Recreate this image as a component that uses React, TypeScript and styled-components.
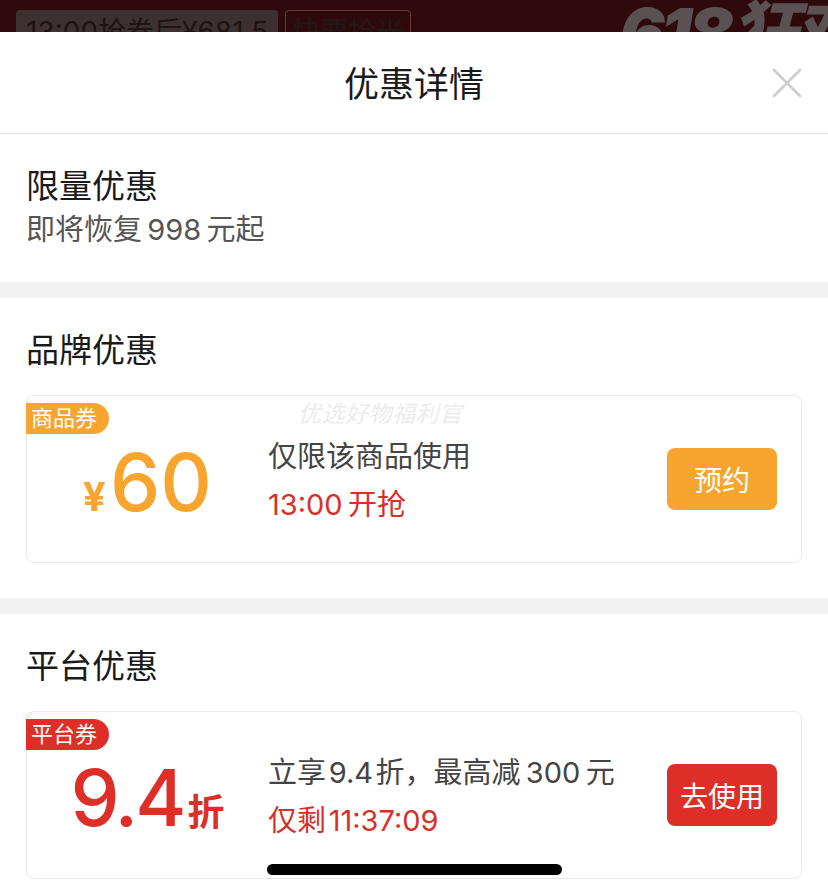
import styled, { createGlobalStyle } from "styled-components";

const GlobalStyle = createGlobalStyle`
  html, body {
    margin: 0;
    padding: 0;
    background: #ffffff;
  }
  body {
    font-family: "Inter", "Noto Sans CJK SC", sans-serif;
    -webkit-font-smoothing: antialiased;
  }
`;

const Page = styled.div`
  width: 828px;
  height: 892px;
  overflow: hidden;
  position: relative;
  background: #ffffff;
`;

const BackStrip = styled.div`
  height: 32px;
  overflow: hidden;
  background: #2f0a0d;
  display: flex;
  align-items: flex-start;
  padding: 10px 0 0 16px;
  box-sizing: border-box;
  gap: 7px;
`;

const BackTag = styled.div`
  background: #3c3130;
  border-radius: 4px;
  padding: 4px 10px;
  font-size: 28px;
  line-height: 36px;
  color: #1e1413;
  white-space: nowrap;
`;

const BackOutline = styled.div`
  border: 1px solid #6a3a3a;
  border-radius: 4px;
  padding: 3px 6px;
  font-size: 28px;
  line-height: 36px;
  color: #241717;
  white-space: nowrap;
`;

const BackBrand = styled.div`
  margin-left: auto;
  margin-top: -18px;
  margin-right: -30px;
  font-size: 68px;
  line-height: 80px;
  font-weight: 900;
  font-style: italic;
  color: #5a5252;
  letter-spacing: -4px;
  white-space: nowrap;
`;

const Sheet = styled.div`
  background: #ffffff;
`;

const Header = styled.div`
  height: 102px;
  display: grid;
  grid-template-columns: 1fr auto 1fr;
  align-items: center;
  border-bottom: 1px solid #e8e8e8;
  box-sizing: border-box;
`;

const HeaderTitle = styled.div`
  grid-column: 2;
  font-size: 35px;
  color: #1a1a1a;
  line-height: 44px;
  padding-top: 2px;
`;

const CloseBtn = styled.div`
  grid-column: 3;
  justify-self: end;
  margin-right: 24px;
  width: 34px;
  height: 34px;
  display: flex;
  align-items: center;
  justify-content: center;
`;

const Section = styled.div<{ $bottom?: number }>`
  padding: 30px 26px ${(p) => p.$bottom ?? 30}px;
`;

const Gap = styled.div`
  height: 16px;
  background: #f2f2f2;
`;

const SectionTitle = styled.div`
  font-size: 33px;
  line-height: 44px;
  color: #1a1a1a;
`;

const SubText = styled.div`
  font-size: 29px;
  line-height: 44px;
  color: #555555;
`;

const Card = styled.div`
  position: relative;
  margin-top: 23px;
  height: 168px;
  border: 1px solid #e9e9e9;
  border-radius: 8px;
  box-sizing: border-box;
  display: flex;
  align-items: center;
  padding-right: 24px;
`;

const Badge = styled.div<{ $color: string }>`
  position: absolute;
  left: -1px;
  top: 7px;
  height: 31px;
  padding: 0 12px 0 5px;
  background: ${(p) => p.$color};
  border-radius: 0 16px 16px 0;
  color: #ffffff;
  font-size: 22px;
  line-height: 31px;
`;

const Watermark = styled.div`
  position: absolute;
  left: 271px;
  top: 2px;
  font-size: 23px;
  line-height: 32px;
  color: #ececec;
  font-style: italic;
  letter-spacing: 0.5px;
`;

const AmountCol = styled.div`
  width: 241px;
  display: flex;
  justify-content: center;
  align-items: baseline;
  gap: 4px;
  padding-top: 6px;
`;

const Amount = styled.span<{ $color: string; $size: number; $track?: number }>`
  color: ${(p) => p.$color};
  font-size: ${(p) => p.$size}px;
  line-height: 1;
  font-weight: ${(p) => (p.$size > 50 ? 500 : 700)};
  letter-spacing: ${(p) => p.$track ?? 0}px;
`;

const Info = styled.div`
  flex: 1;
  display: flex;
  flex-direction: column;
  gap: 8px;
  padding-top: 4px;
`;

const InfoLine = styled.div<{ $red?: boolean }>`
  font-size: 29px;
  line-height: 40px;
  white-space: nowrap;
  color: ${(p) => (p.$red ? "#d53129" : "#444444")};
`;

const ActionBtn = styled.div<{ $color: string }>`
  width: 110px;
  height: 62px;
  border-radius: 8px;
  background: ${(p) => p.$color};
  color: #ffffff;
  font-size: 28px;
  display: flex;
  align-items: center;
  justify-content: center;
`;

const HomeBar = styled.div`
  position: absolute;
  left: 267px;
  bottom: 17px;
  width: 295px;
  height: 11px;
  border-radius: 6px;
  background: #000000;
`;

const ORANGE = "#f8a52f";
const RED = "#dd2f27";
const HAIR = "\u200A";
const THIN = "\u2009";

const App = () => {
  return (
    <Page>
      <GlobalStyle />
      <BackStrip>
        <BackTag>13:00抢券后¥681.5</BackTag>
        <BackOutline>快要抢光</BackOutline>
        <BackBrand>618狂欢</BackBrand>
      </BackStrip>
      <Sheet>
        <Header>
          <HeaderTitle>优惠详情</HeaderTitle>
          <CloseBtn>
            <svg width="30" height="30" viewBox="0 0 30 30">
              <path
                d="M2 2 L28 28 M28 2 L2 28"
                stroke="#cdcdcd"
                strokeWidth="2.6"
                strokeLinecap="round"
              />
            </svg>
          </CloseBtn>
        </Header>

        <Section>
          <SectionTitle>限量优惠</SectionTitle>
          <SubText>{`即将恢复${THIN}998${THIN}元起`}</SubText>
        </Section>
        <Gap />

        <Section $bottom={35}>
          <SectionTitle>品牌优惠</SectionTitle>
          <Card>
            <Badge $color={ORANGE}>商品券</Badge>
            <Watermark>优选好物福利官</Watermark>
            <AmountCol>
              <Amount $color={ORANGE} $size={40}>
                ¥
              </Amount>
              <Amount $color={ORANGE} $size={80}>
                60
              </Amount>
            </AmountCol>
            <Info>
              <InfoLine>仅限该商品使用</InfoLine>
              <InfoLine $red>{`13:00${THIN}开抢`}</InfoLine>
            </Info>
            <ActionBtn $color={ORANGE}>预约</ActionBtn>
          </Card>
        </Section>
        <Gap />

        <Section>
          <SectionTitle>平台优惠</SectionTitle>
          <Card>
            <Badge $color={RED}>平台券</Badge>
            <AmountCol>
              <Amount $color={RED} $size={78} $track={-3}>
                9.4
              </Amount>
              <Amount $color={RED} $size={37}>
                折
              </Amount>
            </AmountCol>
            <Info>
              <InfoLine>{`立享${HAIR}9.4${HAIR}折，最高减${THIN}300${THIN}元`}</InfoLine>
              <InfoLine $red>{`仅剩${HAIR}11:37:09`}</InfoLine>
            </Info>
            <ActionBtn $color={RED}>去使用</ActionBtn>
          </Card>
        </Section>
      </Sheet>
      <HomeBar />
    </Page>
  );
};

export default App;
